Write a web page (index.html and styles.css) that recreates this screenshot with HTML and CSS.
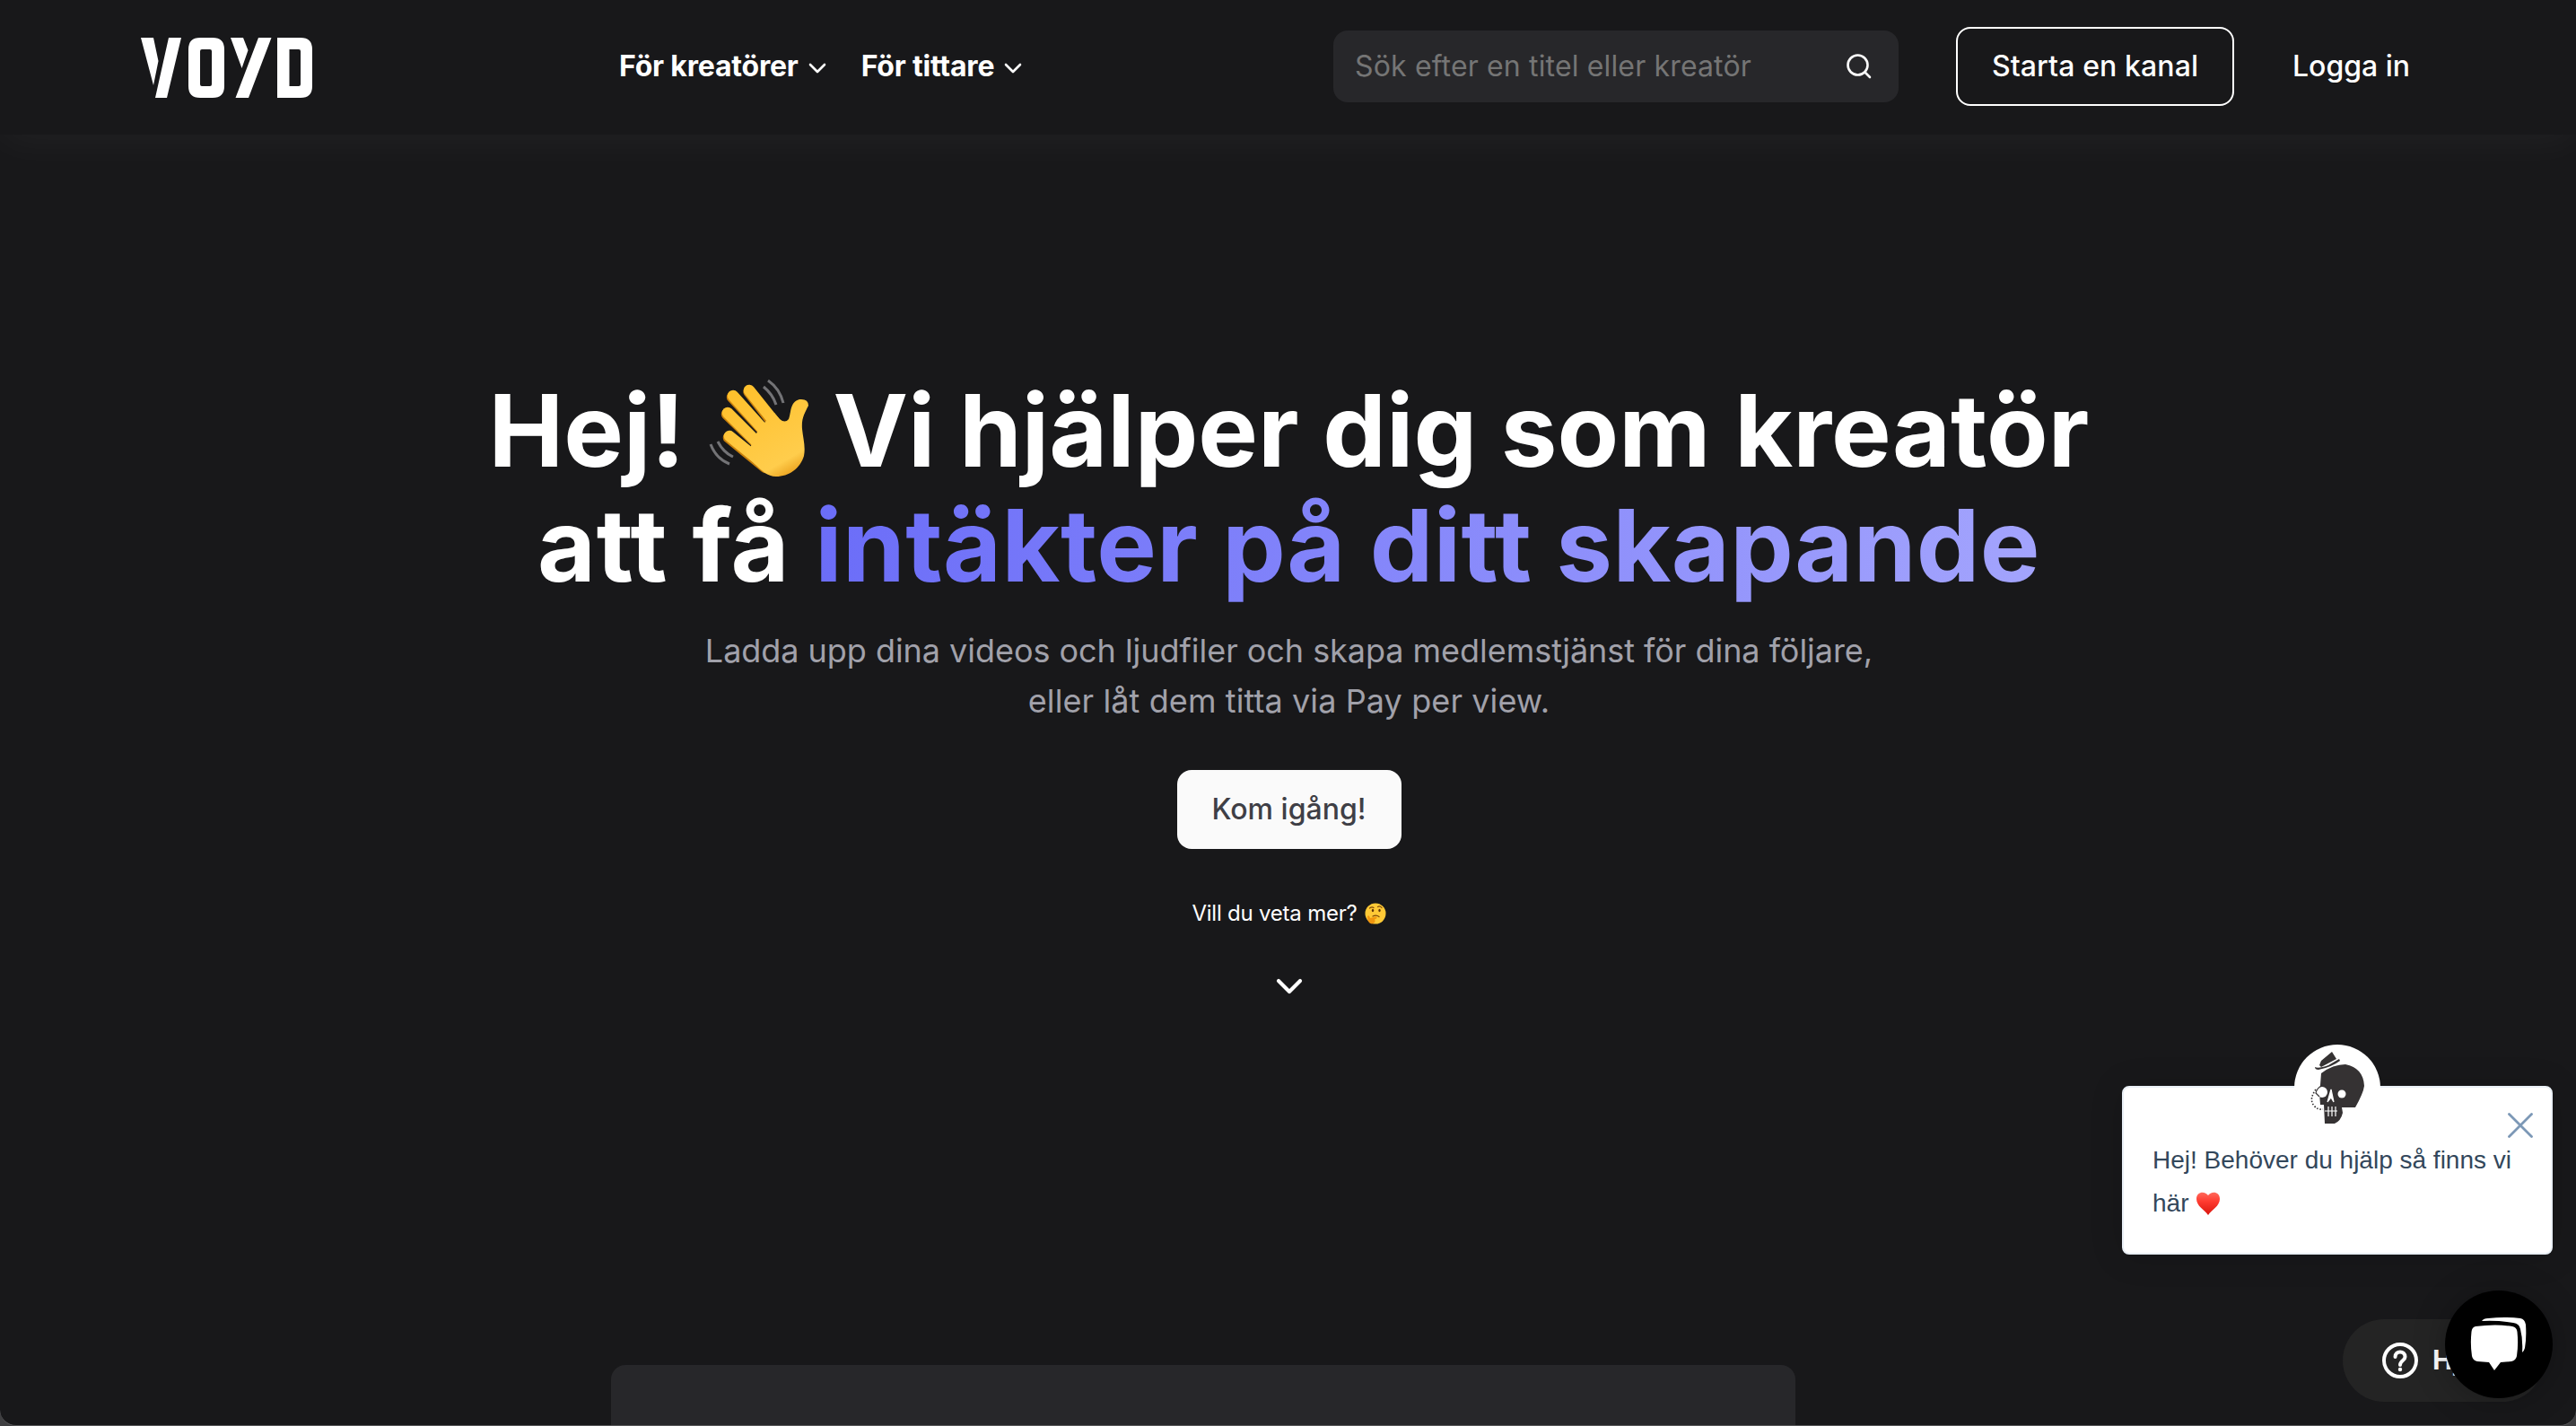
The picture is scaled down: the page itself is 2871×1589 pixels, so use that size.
FILE: index.html
```html
<!DOCTYPE html>
<html lang="sv">
<head>
<meta charset="utf-8">
<title>VOYD</title>
<link rel="stylesheet" href="styles.css">
</head>
<body>
<div class="page">
  <header class="header">
    <a class="logo" aria-label="VOYD">
      <svg width="192" height="67" viewBox="0 0 192 67" fill="#fff">
        <path d="M0 0H14L19.500 26L14 53ZM31 0H45L29 67H16Z"/>
        <path fill-rule="evenodd" d="M66 0H80Q93 0 93 13V54Q93 67 80 67H66Q53 67 53 54V13Q53 0 66 0ZM68 13Q66 13 66 15V52Q66 54 68 54H77Q79 54 79 52V15Q79 13 77 13Z"/>
        <path d="M100 0H114L119.500 14L112.500 34ZM131 0H145.500L120 67H105.500Z"/>
        <path fill-rule="evenodd" d="M152 0H178Q191 0 191 13V54Q191 67 178 67H152ZM165.500 13V54H176Q178 54 178 52V15Q178 13 176 13Z"/>
      </svg>
    </a>
    <nav class="nav">
      <a class="nav-item"><span>För kreatörer</span><svg width="20" height="12" viewBox="0 0 20 12"><path d="M2 2L10 10L18 2"/></svg></a>
      <a class="nav-item"><span>För tittare</span><svg width="20" height="12" viewBox="0 0 20 12"><path d="M2 2L10 10L18 2"/></svg></a>
    </nav>
    <div class="search">
      <span class="placeholder">Sök efter en titel eller kreatör</span>
      <svg width="28" height="28" viewBox="0 0 28 28"><circle cx="12.500" cy="12.500" r="11"/><path d="M20.500 20.500L26 26"/></svg>
    </div>
    <a class="start"><span>Starta en kanal</span></a>
    <a class="login"><span>Logga in</span></a>
  </header>

  <main class="hero">
    <h1 class="title">
      <span class="line"><span>Hej!</span><svg class="wave" width="112" height="112" viewBox="9 12 112 112">
        <defs>
          <linearGradient id="skin" gradientUnits="userSpaceOnUse" x1="50" y1="20" x2="108" y2="122"><stop offset="0" stop-color="#ffc02c"/><stop offset=".8" stop-color="#ffcd4c"/><stop offset="1" stop-color="#e3930f"/></linearGradient>
        </defs>
        <g fill="none" stroke="#737376" stroke-width="3"><path d="M75 14Q88 23 92 39"/><path d="M70 21Q80 29 84 41"/><path d="M11 85Q17 101 32 107"/><path d="M19 82Q25 94 36 99"/></g>
        <g fill="none" stroke="#c9800c" stroke-width="12.500" stroke-linecap="round"><path d="M53.500 26.500L84 66"/><path d="M35 32.500L80 81"/><path d="M29 51.500L70 91"/><path d="M31 77.500L72 111"/></g>
        <g fill="none" stroke="url(#skin)" stroke-width="12.500" stroke-linecap="round"><path d="M54 25L90 70"/><path d="M36 31L80 80"/><path d="M30 50L70 90"/><path d="M32 76L74 110"/></g>
        <path fill="url(#skin)" d="M72 60L82 50L88 57Q94 62 98 57C101 50 99 38 110 35Q120 34 120 42C116 50 112 56 113 68C114 78 117 88 115 98C111 112 98 121 84 121C74 121 68 114 60 107L50 96L56 87L58 80L62 73L66 66Z"/>
      </svg><span>Vi hjälper dig som kreatör</span></span>
      <span class="line"><span class="att">att få</span><span class="accent">intäkter på ditt skapande</span></span>
    </h1>
    <p class="lead"><span class="lead-a">Ladda upp dina videos och ljudfiler och skapa medlemstjänst för dina följare,</span><span class="lead-b">eller låt dem titta via Pay per view.</span></p>
    <a class="cta"><span>Kom igång!</span></a>
    <p class="more"><span>Vill du veta mer?</span><svg width="24" height="24" viewBox="0 0 24 24">
      <circle cx="12" cy="12" r="11.500" fill="#ffc936"/>
      <ellipse cx="9" cy="8.500" rx="1.200" ry="1.700" fill="#5f3408"/><ellipse cx="16.500" cy="8.500" rx="1.200" ry="1.700" fill="#5f3408"/>
      <path d="M5.500 6Q8 4 10 5.500M14.500 4.500Q17 3 19 5.500M9 15Q13 13 16 15.500" fill="none" stroke="#7d4809" stroke-width="1.200" stroke-linecap="round"/>
      <path d="M3 15Q5 13 6 17L13 15.500Q15 17 11 18.500Q13 22 8 23.500Q3 23 3 15Z" fill="#f0960f"/>
    </svg></p>
    <svg class="down" width="30" height="18" viewBox="0 0 30 18"><path d="M3 3L15 15L27 3"/></svg>
  </main>
  <section class="panel"></section>

  <aside class="message">
    <div class="avatar"></div>
    <svg class="skull" width="62" height="82" viewBox="0 0 62 82">
      <path fill="#353233" d="M10 16L12 11L24 1L29 9L12 18ZM5 18Q9 20 20 16L32 9L33 11Q24 18 9 21Q5 21 5 18Z"/>
      <path fill="#353233" d="M12 25Q25 15 39 15Q59 19 60 39Q59 47 50 63H35L36 69Q34 78 27 81H16L15 60H11L10 47L11 38Z"/>
      <circle cx="13" cy="46" r="6" fill="#fff"/><circle cx="35" cy="48" r="4.500" fill="#fff"/>
      <path d="M19 57L23 43L26 57L23 52ZM16 67H30M20 62V73M24 62V73M28 62V73" fill="#fff" stroke="#fff" stroke-width="1.200"/>
      <path d="M6 43Q-2 54 4 61Q8 66 14 65" fill="none" stroke="#353233" stroke-width="1.600" stroke-dasharray="1.600 1.800"/><path d="M12 39Q7 42 6 47L10 51" fill="none" stroke="#353233" stroke-width="1.200"/>
    </svg>
    <svg class="close" width="28" height="28" viewBox="0 0 28 28"><path d="M1.500 1.500L26.500 26.500M26.500 1.500L1.500 26.500"/></svg>
    <p class="msg-text"><span>Hej! Behöver du hjälp så finns vi</span><span class="msg-b">här <svg width="28" height="26" viewBox="0 0 28 26"><defs><linearGradient id="red" x1="0" y1="0" x2="0" y2="1"><stop offset="0" stop-color="#ff6a5c"/><stop offset=".4" stop-color="#ff3b30"/><stop offset="1" stop-color="#d9160e"/></linearGradient></defs><path fill="url(#red)" d="M14 4C17-1 27-1 27 8C27 16 18 20 14 26C10 20 1 16 1 8C1-1 11-1 14 4Z"/></svg></span></p>
  </aside>
  <div class="help">
    <svg width="40" height="40" viewBox="0 0 40 40"><circle cx="20" cy="20" r="18"/><path d="M14.500 16C14.500 8.500 25.500 8.500 25.500 16C25.500 20 20 20 20 25"/><circle class="dot" cx="20" cy="30" r="2.200"/></svg>
    <span>Hjälp</span>
  </div>
  <div class="chat">
    <svg width="64" height="62" viewBox="0 0 64 62" fill="#fff"><path d="M6 11Q29 8 47 11Q52 12 52.500 17Q54 31 52 44Q51 49 46 50L34 51L27 60L21 51L8 50Q3 49 2 44Q0 31 1.500 17Q2 12 6 11Z"/><path d="M13 5Q15 2 20 2Q39 0 56 2Q61 3 62 9Q63 24 61 35Q60 39 58 40Q59 26 56 14Q55 8 48 7Q30 4 13 5Z"/></svg>
  </div>
</div>
</body>
</html>
```
FILE: styles.css
```css
* { box-sizing: border-box; }
body { margin: 0; background: #3f3f41; font-family: Inter, "Noto Sans", sans-serif; color: #fff; }
h1, p { margin: 0; }
svg { display: block; flex: none; }
.page { position: relative; width: 2871px; height: 1589px; overflow: hidden; background: #18181a; border-bottom: 1px solid #58585a; border-radius: 0 0 18px 18px; display: flex; flex-direction: column; }
.header { height: 150px; flex: none; display: flex; align-items: flex-start; box-shadow: 0 8px 44px rgba(255, 255, 255, .045); white-space: nowrap; }
.logo { margin: 42px 0 0 157px; width: 192px; }
.nav { display: flex; gap: 39px; margin: 54px 0 0 341px; width: 796px; line-height: 40px; font-size: 32px; font-weight: 700; letter-spacing: -.2px; }
.nav-item { display: flex; align-items: center; gap: 11px; }
.nav-item svg { margin-top: 4px; fill: none; stroke: #fff; stroke-width: 2.6; stroke-linecap: round; stroke-linejoin: round; }
.search { width: 630px; height: 80px; margin-top: 34px; padding: 0 30px 0 24px; border-radius: 16px; background: #27272a; display: flex; align-items: center; justify-content: space-between; }
.placeholder { font-size: 32px; color: #757575; letter-spacing: .15px; padding-bottom: 2px; }
.search svg { fill: none; stroke: #fff; stroke-width: 2.6; stroke-linecap: round; }
.start { width: 310px; height: 88px; margin: 30px 0 0 64px; padding-bottom: 2px; border: 2px solid #fff; border-radius: 16px; display: flex; align-items: center; justify-content: center; font-size: 32px; font-weight: 500; letter-spacing: .1px; }
.login { margin: 54px 0 0 65px; line-height: 40px; font-size: 32px; font-weight: 500; }
.hero { height: 1371px; flex: none; padding: 265px 0 0 2px; display: flex; flex-direction: column; align-items: center; white-space: nowrap; }
.title { font-size: 112px; line-height: 128px; font-weight: 700; letter-spacing: .05px; }
.line { display: flex; justify-content: center; }
.wave { margin: 7px 26px 0 27px; }
.att { margin-right: 28px; letter-spacing: .7px; }
.accent { letter-spacing: .4px; color: transparent; background: linear-gradient(90deg, #6b6df8, #a3a4fd); -webkit-background-clip: text; background-clip: text; }
.lead { margin-top: 26px; font-size: 36px; line-height: 56px; color: #a1a1aa; display: flex; flex-direction: column; align-items: center; }
.lead-a { letter-spacing: -.04px; }
.lead-b { letter-spacing: .1px; }
.cta { margin-top: 49px; width: 250px; height: 88px; padding-bottom: 2px; border-radius: 16px; background: #fafafa; color: #3f3f46; display: flex; align-items: center; justify-content: center; font-size: 32px; font-weight: 500; }
.more { margin-top: 56px; height: 32px; display: flex; align-items: center; gap: 8px; font-size: 24px; line-height: 32px; letter-spacing: -.22px; }
.down { margin-top: 56px; fill: none; stroke: #fff; stroke-width: 4.2; stroke-linecap: round; stroke-linejoin: round; }
.panel { width: 1320px; height: 68px; flex: none; margin-left: 681px; border-radius: 16px 16px 0 0; background: #27272a; }
.message { position: absolute; left: 2365px; top: 1210px; width: 480px; height: 188px; border: 2px solid #eaf0f6; border-radius: 8px; background: #fff; box-shadow: 0 2px 36px rgba(0, 0, 0, .15); padding: 57px 0 0 32px; }
.avatar { position: absolute; left: 190px; top: -48px; width: 96px; height: 96px; border-radius: 50%; background: #fff; }
.skull { position: absolute; left: 208px; top: -41px; }
.close { position: absolute; left: 428px; top: 28px; fill: none; stroke: #7c98b6; stroke-width: 2.8; stroke-linecap: round; }
.msg-text { display: flex; flex-direction: column; font-family: "Liberation Sans", Arial, sans-serif; font-size: 28px; line-height: 48px; color: #33475b; white-space: nowrap; }
.msg-b { display: flex; align-items: center; gap: 8px; }
.help { position: absolute; left: 2611px; top: 1470px; width: 224px; height: 92px; border-radius: 46px; background: #242424; display: flex; align-items: center; padding-left: 44px; gap: 16px; font-family: "Liberation Sans", Arial, sans-serif; font-size: 31px; font-weight: 700; letter-spacing: 1px; }
.help svg { fill: none; stroke: #fff; stroke-width: 4; stroke-linecap: round; }
.help .dot { fill: #fff; stroke: none; }
.chat { position: absolute; left: 2725px; top: 1438px; width: 120px; height: 120px; border-radius: 50%; background: #000; box-shadow: 0 2px 36px rgba(0, 0, 0, .25); padding: 29px 0 0 28px; }
```
